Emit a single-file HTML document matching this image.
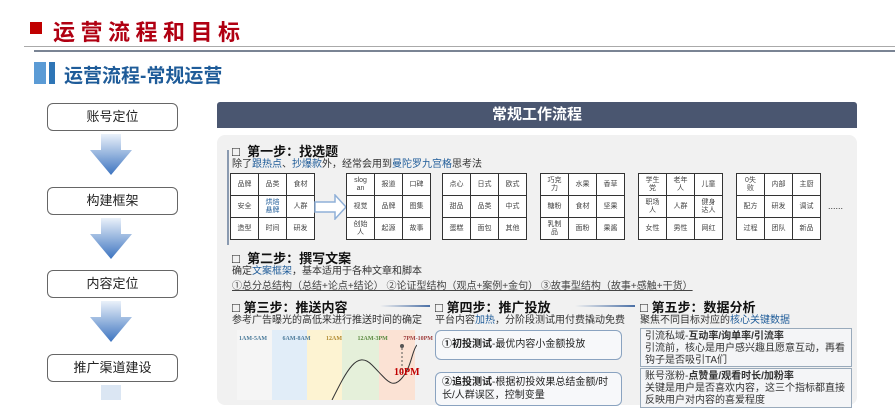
<!DOCTYPE html>
<html><head><meta charset="utf-8"><style>
*{margin:0;padding:0;box-sizing:border-box}
body{width:895px;height:400px;overflow:hidden;background:#fff;font-family:"Liberation Sans","Noto Sans CJK SC",sans-serif;position:relative;color:#222}
.a{position:absolute}
.lb{position:absolute;left:47px;width:131px;height:28px;border:1px solid #666;border-radius:6px;background:#fff;font-size:13px;text-align:center;line-height:26px;color:#222}
table{border-collapse:collapse;position:absolute;background:#fff}
td{border:1.5px solid #333;width:28px;height:22px;font-size:7px;color:#444;text-align:center;line-height:8px;padding:0 2px}
.h{font-size:13px;font-weight:bold;color:#111}
.d{font-size:10px;color:#333}
.bx{position:absolute;border:1.5px solid #8aa3c0;border-radius:6px;background:#f7f8fa;font-size:10px;padding:3px 6px;line-height:13px}
.sb{position:absolute;border:1.5px solid #9ab;background:#f4f5f7;font-size:10px;padding:2px 4px;line-height:12px;color:#333}
</style></head><body>
<div class="a" style="left:30px;top:22px;width:12px;height:12px;background:#c00000"></div>
<div class="a" style="left:53px;top:15px;font-size:22px;font-weight:bold;color:#b00012;letter-spacing:5.5px">运营流程和目标</div>
<div class="a" style="left:24px;top:46px;width:871px;height:1px;background:#aaa"></div>
<div class="a" style="left:34px;top:50px;width:861px;height:2px;background:#7a8494"></div>
<div class="a" style="left:34px;top:62px;width:12px;height:22px;background:#5b9bd5"></div>
<div class="a" style="left:49px;top:62px;width:6px;height:22px;background:#2e75b6"></div>
<div class="a" style="left:64px;top:61px;font-size:19px;font-weight:bold;color:#1f5c99">运营流程-常规运营</div>

<div class="lb" style="top:103px">账号定位</div>
<div class="lb" style="top:187px">构建框架</div>
<div class="lb" style="top:270px">内容定位</div>
<div class="lb" style="top:354px">推广渠道建设</div>
<svg class="a" style="left:0;top:0" width="220" height="400"><defs><linearGradient id="g" x1="0" y1="0" x2="0" y2="1"><stop offset="0" stop-color="#eaf1fa"/><stop offset="1" stop-color="#3d74c0"/></linearGradient></defs>
<path d="M101 134h20v16h11l-21 25-21-25h11z" fill="url(#g)"/>
<path d="M101 218h20v16h11l-21 25-21-25h11z" fill="url(#g)"/>
<path d="M101 301h20v16h11l-21 25-21-25h11z" fill="url(#g)"/>
<path d="M101 385h20v15h-20z" fill="#dbe6f3"/></svg>

<div class="a" style="left:217px;top:102px;width:640px;height:26px;background:#4a5670;border-radius:3px 3px 0 0;color:#fff;font-size:15px;font-weight:bold;text-align:center;line-height:26px">常规工作流程</div>
<div class="a" style="left:217px;top:135px;width:640px;height:270px;background:#f1f1f1;border-radius:8px"></div>
<div class="a" style="left:227px;top:150px;width:1.5px;height:95px;background:#8a9ab0"></div>

<div class="a h" style="left:232px;top:141px">□&nbsp; 第一步：找选题</div>
<div class="a d" style="left:232px;top:155px">除了<span style="color:#1f5c99">跟热点</span>、<span style="color:#1f5c99">抄爆款</span>外，经常会用到<span style="color:#1f5c99">曼陀罗九宫格</span>思考法</div>

<table style="left:230px;top:173px"><tr><td>品牌</td><td>品类</td><td>食材</td></tr><tr><td>安全</td><td style="color:#1f5c99">烘焙<br>悬牌</td><td>人群</td></tr><tr><td>造型</td><td>时间</td><td>研发</td></tr></table>
<svg class="a" style="left:314px;top:194px" width="34" height="26"><path d="M1 8h20V1l11 12-11 12v-7H1z" fill="#fff" stroke="#8fb0d8" stroke-width="1.5"/></svg>
<table style="left:346px;top:173px"><tr><td>slog<br>an</td><td>报道</td><td>口碑</td></tr><tr><td>视觉</td><td>品牌</td><td>图集</td></tr><tr><td>创始<br>人</td><td>起源</td><td>故事</td></tr></table>
<table style="left:442px;top:173px"><tr><td>点心</td><td>日式</td><td>欧式</td></tr><tr><td>甜品</td><td>品类</td><td>中式</td></tr><tr><td>蛋糕</td><td>面包</td><td>其他</td></tr></table>
<table style="left:540px;top:173px"><tr><td>巧克<br>力</td><td>水果</td><td>香草</td></tr><tr><td>糖粉</td><td>食材</td><td>坚果</td></tr><tr><td>乳制<br>品</td><td>面粉</td><td>果酱</td></tr></table>
<table style="left:638px;top:173px"><tr><td>学生<br>党</td><td>老年<br>人</td><td>儿童</td></tr><tr><td>职场<br>人</td><td>人群</td><td>健身<br>达人</td></tr><tr><td>女性</td><td>男性</td><td>网红</td></tr></table>
<table style="left:736px;top:173px"><tr><td>0失<br>败</td><td>内部</td><td>主厨</td></tr><tr><td>配方</td><td>研发</td><td>调试</td></tr><tr><td>过程</td><td>团队</td><td>新品</td></tr></table>
<div class="a" style="left:828px;top:201px;font-size:9px;color:#333">......</div>

<div class="a h" style="left:232px;top:248px">□&nbsp; 第二步：撰写文案</div>
<div class="a d" style="left:232px;top:262px">确定<span style="color:#1f5c99">文案框架</span>，基本适用于各种文章和脚本</div>
<div class="a d" style="left:232px;top:277px;text-decoration:underline;color:#444">①总分总结构（总结+论点+结论） ②论证型结构（观点+案例+金句） ③故事型结构（故事+感触+干货）</div>

<div class="a h" style="left:232px;top:297px">□ 第三步：推送内容</div>
<div class="a" style="left:380px;top:305px;width:50px;height:2px;background:linear-gradient(90deg,#f1f1f1,#4a6fa5)"></div>
<div class="a d" style="left:232px;top:311px">参考广告曝光的高低来进行推送时间的确定</div>
<div class="a" style="left:237px;top:330px;width:1px;height:70px;background:#5b7fb0"></div>
<div class="a" style="left:237px;top:330px;width:35px;height:70px;background:#f5f5f5"></div>
<div class="a" style="left:272px;top:330px;width:35px;height:70px;background:#e1edf8"></div>
<div class="a" style="left:307px;top:330px;width:35px;height:70px;background:#fdf3d2"></div>
<div class="a" style="left:342px;top:330px;width:37px;height:70px;background:#e5f0da"></div>
<div class="a" style="left:379px;top:330px;width:36px;height:70px;background:#fbe2d4"></div>
<div class="a" style="left:239px;top:336px;font-size:6px;font-family:'Liberation Serif';color:#4a7a9a;font-weight:bold;word-spacing:14px">1AM-5AM 6AM-8AM <span style="color:#b08a30">12AM</span> <span style="color:#5a8a40">12AM-3PM</span> <span style="color:#a04040">7PM-10PM</span></div>
<svg class="a" style="left:237px;top:330px" width="180" height="70"><path d="M95 70C110 40 120 20 135 35S155 60 165 48 175 20 180 15" fill="none" stroke="#333" stroke-width="1"/><path d="M165 18v25" stroke="#555" stroke-dasharray="2 2"/><circle cx="165" cy="16" r="2" fill="#555"/></svg>
<div class="a" style="left:394px;top:367px;font-size:10px;font-weight:bold;color:#c00000;font-family:'Liberation Serif'">10PM</div>

<div class="a h" style="left:435px;top:297px">□ 第四步：推广投放</div>
<div class="a" style="left:575px;top:305px;width:60px;height:2px;background:linear-gradient(90deg,#f1f1f1,#4a6fa5)"></div>
<div class="a d" style="left:435px;top:311px">平台内容<span style="color:#1f5c99">加热</span>，分阶段测试用付费撬动免费</div>
<div class="bx" style="left:435px;top:330px;width:187px;height:30px;line-height:22px"><b>①初投测试</b>-最优内容小金额投放</div>
<div class="bx" style="left:435px;top:372px;width:187px;height:34px"><b>②追投测试</b>-根据初投效果总结金额/时长/人群误区，控制变量</div>

<div class="a h" style="left:640px;top:297px">□ 第五步：数据分析</div>
<div class="a d" style="left:640px;top:311px">聚焦不同目标对应的<span style="color:#1f5c99">核心关键数据</span></div>
<div class="sb" style="left:640px;top:328px;width:212px;height:39px">引流私域-<b>互动率/询单率/引流率</b><br>引流前，核心是用户感兴趣且愿意互动，再看钩子是否吸引TA们</div>
<div class="sb" style="left:640px;top:368px;width:212px;height:40px">账号涨粉-<b>点赞量/观看时长/加粉率</b><br>关键是用户是否喜欢内容，这三个指标都直接反映用户对内容的喜爱程度</div>
</body></html>
